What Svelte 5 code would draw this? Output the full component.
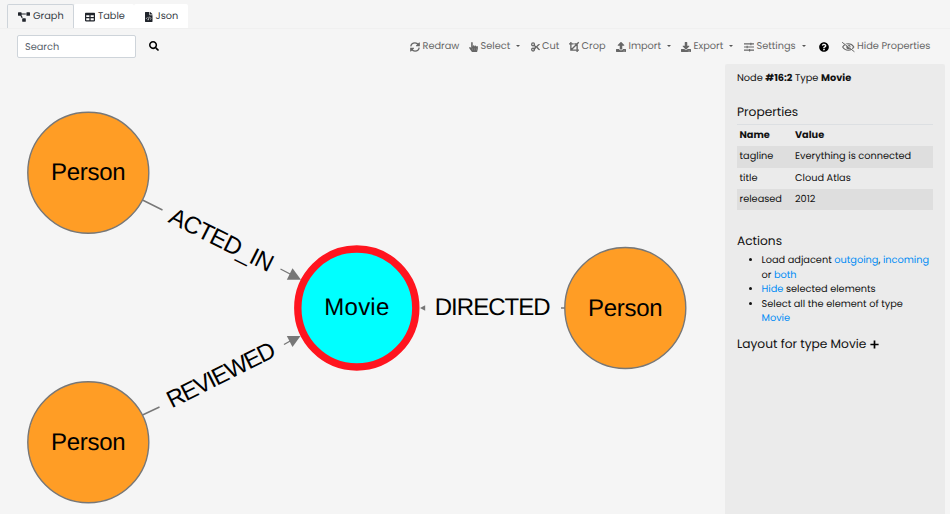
<script>
  const tabs = [
    { icon: 'graph', label: 'Graph', width: 67, active: true },
    { icon: 'table', label: 'Table', width: 60 },
    { icon: 'json', label: 'Json', width: 54 }
  ];
  // width: slot from the start of one tool to the start of the next
  const tools = [
    { icon: 'redraw', label: 'Redraw', width: 59, size: 37 },
    { icon: 'select', label: 'Select', width: 61.5, size: 30, menu: true },
    { icon: 'cut', label: 'Cut', width: 38.5, size: 17 },
    { icon: 'crop', label: 'Crop', width: 47, size: 25 },
    { icon: 'import', label: 'Import', width: 65, size: 33, menu: true },
    { icon: 'export', label: 'Export', width: 63, size: 30, menu: true },
    { icon: 'settings', label: 'Settings', width: 75, size: 40, menu: true },
    { icon: 'help', label: '', width: 23, size: 0 },
    { icon: 'hide', label: 'Hide Properties', width: 89, size: 74 }
  ];
  const rows = [
    ['tagline', 'Everything is connected'],
    ['title', 'Cloud Atlas'],
    ['released', '2012']
  ];
  const people = [
    { x: 88.3, y: 172.8 },
    { x: 88.3, y: 442.3 },
    { x: 625.3, y: 308 }
  ];
</script>

{#snippet icon(name)}
  {#if name === 'graph'}
    <svg class="ico graph-ico" viewBox="0 0 640 512"><path d="M384 320H256c-17.67 0-32 14.33-32 32v128c0 17.67 14.33 32 32 32h128c17.67 0 32-14.33 32-32V352c0-17.67-14.33-32-32-32zM192 32c0-17.67-14.33-32-32-32H32C14.33 0 0 14.33 0 32v128c0 17.67 14.33 32 32 32h95.72l73.16 128.04C211.98 300.98 232.4 288 256 288h.28L192 175.51V128h224V64H192V32zM608 0H480c-17.67 0-32 14.33-32 32v128c0 17.67 14.33 32 32 32h128c17.67 0 32-14.33 32-32V32c0-17.67-14.33-32-32-32z" /></svg>
  {:else if name === 'table'}
    <svg class="ico" viewBox="0 0 512 512"><path d="M464 32H48C21.49 32 0 53.49 0 80v352c0 26.51 21.49 48 48 48h416c26.51 0 48-21.49 48-48V80c0-26.51-21.49-48-48-48zM224 416H64v-96h160v96zm0-160H64v-96h160v96zm224 160H288v-96h160v96zm0-160H288v-96h160v96z" /></svg>
  {:else if name === 'json'}
    <svg class="ico file-ico" viewBox="0 0 384 512"><path d="M384 121.941V128H256V0h6.059c6.365 0 12.47 2.529 16.971 7.029l97.941 97.941A24.005 24.005 0 0 1 384 121.941zM248 160c-13.2 0-24-10.8-24-24V0H24C10.745 0 0 10.745 0 24v464c0 13.255 10.745 24 24 24h336c13.255 0 24-10.745 24-24V160H248z" /><path d="M125 270l-58 58 58 58M259 270l58 58-58 58M216 235l-48 186" fill="none" stroke="#fff" stroke-width="34" /></svg>
  {:else if name === 'search'}
    <svg class="ico" viewBox="0 0 512 512"><path d="M505 442.7L405.3 343c-4.5-4.5-10.6-7-17-7H372c27.6-35.3 44-79.7 44-128C416 93.1 322.9 0 208 0S0 93.1 0 208s93.1 208 208 208c48.3 0 92.7-16.4 128-44v16.3c0 6.4 2.5 12.5 7 17l99.7 99.7c9.4 9.4 24.6 9.4 33.9 0l28.3-28.3c9.4-9.4 9.4-24.6.1-34zM208 336c-70.7 0-128-57.2-128-128 0-70.7 57.2-128 128-128 70.7 0 128 57.2 128 128 0 70.7-57.2 128-128 128z" /></svg>
  {:else if name === 'redraw'}
    <svg class="ico" viewBox="0 0 512 512"><path d="M40 225C60 105 150 45 256 45c80 0 130 35 185 95M472 287c-20 120-110 180-216 180-80 0-130-35-185-95" fill="none" stroke="currentColor" stroke-width="64" /><path d="M504 20v196H308v-38l158-158zM8 492V296h196v38L46 492z" /></svg>
  {:else if name === 'select'}
    <svg class="ico narrow" viewBox="0 0 448 512"><path d="M448 240v96c0 3.084-.356 6.159-1.063 9.162l-32 136C410.686 499.23 394.562 512 376 512H168a40.004 40.004 0 0 1-32.35-16.473l-127.997-176c-12.993-17.866-9.043-42.883 8.822-55.876 17.867-12.994 42.884-9.043 55.877 8.823L104 315.992V40c0-22.091 17.908-40 40-40s40 17.909 40 40v200h8v-40c0-22.091 17.908-40 40-40s40 17.909 40 40v40h8v-24c0-22.091 17.908-40 40-40s40 17.909 40 40v24h8c0-22.091 17.908-40 40-40s40 17.909 40 40zm-256 80h-8v96h8v-96zm88 0h-8v96h8v-96zm88 0h-8v96h8v-96z" /></svg>
  {:else if name === 'cut'}
    <svg class="ico narrow" viewBox="0 0 448 512"><g fill="none" stroke="currentColor" stroke-width="64"><circle cx="100" cy="122" r="74" /><circle cx="100" cy="390" r="74" /></g><path d="M150 122l110 95 100-100q50-42 100 0L160 405l-60-45 95-104-95-104z M285 307l80 88q50 42 95 0L325 247z" /></svg>
  {:else if name === 'crop'}
    <svg class="ico" viewBox="0 0 512 512"><path d="M96 0v416h416M0 96h240M272 96h144v144M416 240v272M115 397L500 12" fill="none" stroke="currentColor" stroke-width="70" /></svg>
  {:else if name === 'import'}
    <svg class="ico" viewBox="0 0 512 512"><path d="M296 384h-80c-13.3 0-24-10.7-24-24V192h-87.7c-17.8 0-26.7-21.5-14.1-34.1L242.3 5.7c7.5-7.5 19.8-7.5 27.3 0l152.2 152.2c12.6 12.6 3.7 34.1-14.1 34.1H320v168c0 13.3-10.7 24-24 24zm216-8v112c0 13.3-10.7 24-24 24H24c-13.3 0-24-10.7-24-24V376c0-13.3 10.7-24 24-24h136v8c0 30.9 25.1 56 56 56h80c30.9 0 56-25.1 56-56v-8h136c13.3 0 24 10.7 24 24zm-124 88c0-11-9-20-20-20s-20 9-20 20 9 20 20 20 20-9 20-20zm64 0c0-11-9-20-20-20s-20 9-20 20 9 20 20 20 20-9 20-20z" /></svg>
  {:else if name === 'export'}
    <svg class="ico" viewBox="0 0 512 512"><path d="M216 0h80c13.3 0 24 10.7 24 24v168h87.7c17.8 0 26.7 21.5 14.1 34.1L269.7 378.3c-7.5 7.5-19.8 7.5-27.3 0L90.1 226.1c-12.6-12.6-3.7-34.1 14.1-34.1H192V24c0-13.3 10.7-24 24-24zm296 376v112c0 13.3-10.7 24-24 24H24c-13.3 0-24-10.7-24-24V376c0-13.3 10.7-24 24-24h146.7l49 49c20.1 20.1 52.5 20.1 72.6 0l49-49H488c13.3 0 24 10.7 24 24zm-124 88c0-11-9-20-20-20s-20 9-20 20 9 20 20 20 20-9 20-20zm64 0c0-11-9-20-20-20s-20 9-20 20 9 20 20 20 20-9 20-20z" /></svg>
  {:else if name === 'settings'}
    <svg class="ico" viewBox="0 0 512 512"><path d="M0 96h512M0 256h512M0 416h512M352 32v128M160 192v128M288 352v128" fill="none" stroke="currentColor" stroke-width="54" /></svg>
  {:else if name === 'help'}
    <svg class="ico dark" viewBox="0 0 512 512"><path d="M504 256c0 136.997-111.043 248-248 248S8 392.997 8 256C8 119.083 119.043 8 256 8s248 111.083 248 248zM262.655 90c-54.497 0-89.255 22.957-116.549 63.758-3.536 5.286-2.353 12.415 2.715 16.258l34.699 26.31c5.205 3.947 12.621 3.008 16.665-2.122 17.864-22.658 30.113-35.797 57.303-35.797 20.429 0 45.698 13.148 45.698 32.958 0 14.976-12.363 22.667-32.534 33.976C247.128 238.528 216 254.941 216 296v4c0 6.627 5.373 12 12 12h56c6.627 0 12-5.373 12-12v-1.333c0-28.462 83.186-29.647 83.186-106.667 0-58.002-60.165-102-116.531-102zM256 338c-25.365 0-46 20.635-46 46 0 25.364 20.635 46 46 46s46-20.636 46-46c0-25.365-20.635-46-46-46z" /></svg>
  {:else if name === 'hide'}
    <svg class="ico eye-ico" viewBox="0 0 640 512"><path d="M35 256C100 145 200 92 320 92s220 53 285 164C540 367 440 420 320 420S100 367 35 256z" fill="none" stroke="currentColor" stroke-width="58" /><circle cx="330" cy="256" r="112" /><path d="M0 -25L640 470" stroke="#f5f5f5" stroke-width="65" /><path d="M20 25L620 487" stroke="currentColor" stroke-width="50" stroke-linecap="round" /></svg>
  {:else if name === 'plus'}
    <svg class="plus" viewBox="0 0 9 9"><path d="M4.5 .4v8.2M.4 4.5h8.2" stroke="#000" stroke-width="1.7" /></svg>
  {/if}
{/snippet}

<div class="app">
  <nav class="tabs">
    {#each tabs as t}
      <div class="tab" class:active={t.active} style:width="{t.width}px">
        {@render icon(t.icon)}<span>{t.label}</span>
      </div>
    {/each}
  </nav>

  <div class="bar">
    <div class="field">Search</div>
    <div class="find">{@render icon('search')}</div>
    <div class="tools">
      {#each tools as t}
        <div class="tool" style:width="{t.width}px">
          {@render icon(t.icon)}
          {#if t.label}<span style:width="{t.size}px">{t.label}</span>{/if}
          {#if t.menu}<i class="caret"></i>{/if}
        </div>
      {/each}
    </div>
  </div>

  <main>
    <svg class="graph" width="725" height="450" viewBox="0 64 725 450">
      <g stroke="#777" stroke-width="1.4">
        <path d="M142.5 200L162.5 210M280.5 269L292 275M142.5 415L159.5 407M284 344.5L292 340M565 308h-4" />
      </g>
      <g fill="#777">
        <path d="M301 279.8L292.5 268.3L286.8 279.8z" />
        <path d="M300.5 336L286.8 336L292.5 347z" />
        <path d="M420 308L425.2 305.2v5.6z" />
      </g>
      {#each people as p}
        <circle cx={p.x} cy={p.y} r="60.5" fill="#ff9d25" stroke="#777" stroke-width="1.4" />
        <text x={p.x} y={p.y + 7.5} textLength="74.5">Person</text>
      {/each}
      <circle cx="356.8" cy="308" r="59" fill="#0ff" stroke="#ff151f" stroke-width="7.4" />
      <text x="356.8" y="315.3" textLength="65">Movie</text>
      <text x="492.7" y="315.3" textLength="116">DIRECTED</text>
      <text transform="translate(221.3 240.2) rotate(26.6)" y="7.6" textLength="113">ACTED_IN</text>
      <text transform="translate(221.2 375.2) rotate(-26.6)" y="7.6" textLength="118.5">REVIEWED</text>
    </svg>

    <aside>
      <p class="node">Node <b>#16:2</b> Type <b>Movie</b></p>
      <h2>Properties</h2>
      <table>
        <thead><tr><th>Name</th><th>Value</th></tr></thead>
        <tbody>
          {#each rows as [name, value]}
            <tr><td>{name}</td><td>{value}</td></tr>
          {/each}
        </tbody>
      </table>
      <h2 class="actions">Actions</h2>
      <ul>
        <li>Load adjacent <a>outgoing</a>, <a>incoming</a><br />or <a>both</a></li>
        <li><a>Hide</a> selected elements</li>
        <li>Select all the element of type<br /><a>Movie</a></li>
      </ul>
      <h2 class="layout">Layout for type Movie {@render icon('plus')}</h2>
    </aside>
  </main>
</div>

<style>
  :global(body) { background: #f5f5f5; }
  .app {
    width: 950px; height: 514px; overflow: hidden;
    display: flex; flex-direction: column;
    background: #f5f5f5; color: #111;
    font: 9.76px/14.6px Poppins, Inter, sans-serif;
    text-rendering: geometricPrecision;
  }
  .tabs { display: flex; height: 29px; padding: 4px 7px 0; box-sizing: border-box; border-bottom: 1px solid #f0f0f0; }
  .tab {
    box-sizing: border-box; display: flex; align-items: center; gap: 3px;
    padding: 2px 0 0 11px; background: #fff; border-radius: 2px 2px 0 0; color: #333b43; white-space: nowrap;
  }
  .tab .ico { fill: #20242b; color: #20242b; margin-bottom: 1px; }
  .tab.active { padding: 1px 0 0 10px; background: #f5f5f5; border: 1px solid #ced4da; border-bottom: 0; }
  .ico { width: 10px; height: 10px; flex: none; fill: currentColor; overflow: visible; }
  .ico.dark { color: #000; }
  .ico.graph-ico { width: 12px; }
  .ico.file-ico { width: 7.5px; }
  .ico.narrow { width: 9px; }
  .ico.eye-ico { width: 12.5px; }
  .bar { display: flex; height: 35px; align-items: center; box-sizing: border-box; padding: 0 0 0 17px; }
  .field {
    box-sizing: border-box; width: 119px; height: 23px; padding: 5px 7px 0;
    border: 1px solid #ced4da; border-radius: 2px; background: #fff; color: #56606a;
  }
  .find { display: flex; margin-left: 12.5px; color: #000; padding-bottom: 1px; }
  .tools { display: flex; margin: 2px 0 0 auto; width: 540px; height: 15px; color: #666; }
  .tool { flex: none; display: flex; align-items: center; gap: 2.5px; white-space: nowrap; }
  .tool .ico { margin-bottom: 2px; }
  .tool span { flex: none; }
  .caret { margin: 0 0 3px 3px; border: 2.8px solid transparent; border-top-color: #555; border-bottom: 0; }
  main { display: flex; height: 450px; }
  .graph { flex: none; display: block; }
  text { font: 24px "Liberation Sans", Arial, sans-serif; fill: #000; text-anchor: middle; }
  aside { box-sizing: border-box; width: 220px; padding: 8px 12px 0; background: #ebebeb; border-radius: 2px 2px 0 0; }
  p { margin: 0; }
  b, th { font-weight: 700; }
  h2 { margin: 17px 0 0; font-size: 12.2px; line-height: 17px; font-weight: 400; white-space: nowrap; }
  table { width: 196px; margin-top: 3px; border-collapse: collapse; border-top: 1px solid #dcdfe2; table-layout: fixed; }
  th, td { height: 21px; padding: 2px 2.5px 0; box-sizing: border-box; text-align: left; white-space: nowrap; }
  th { height: 22px; }
  tbody tr:first-child td { height: 22px; padding-top: 1px; }
  th:first-child { width: 55.5px; }
  tbody tr:nth-child(odd) { background: #dedede; }
  .actions { margin-top: 23px; }
  ul { margin: 4px 0 0; padding-left: 24.5px; white-space: nowrap; }
  a { color: #008cf5; }
  .layout { margin-top: 9px; }
  .plus { width: 9px; height: 9px; vertical-align: -1px; }
</style>
